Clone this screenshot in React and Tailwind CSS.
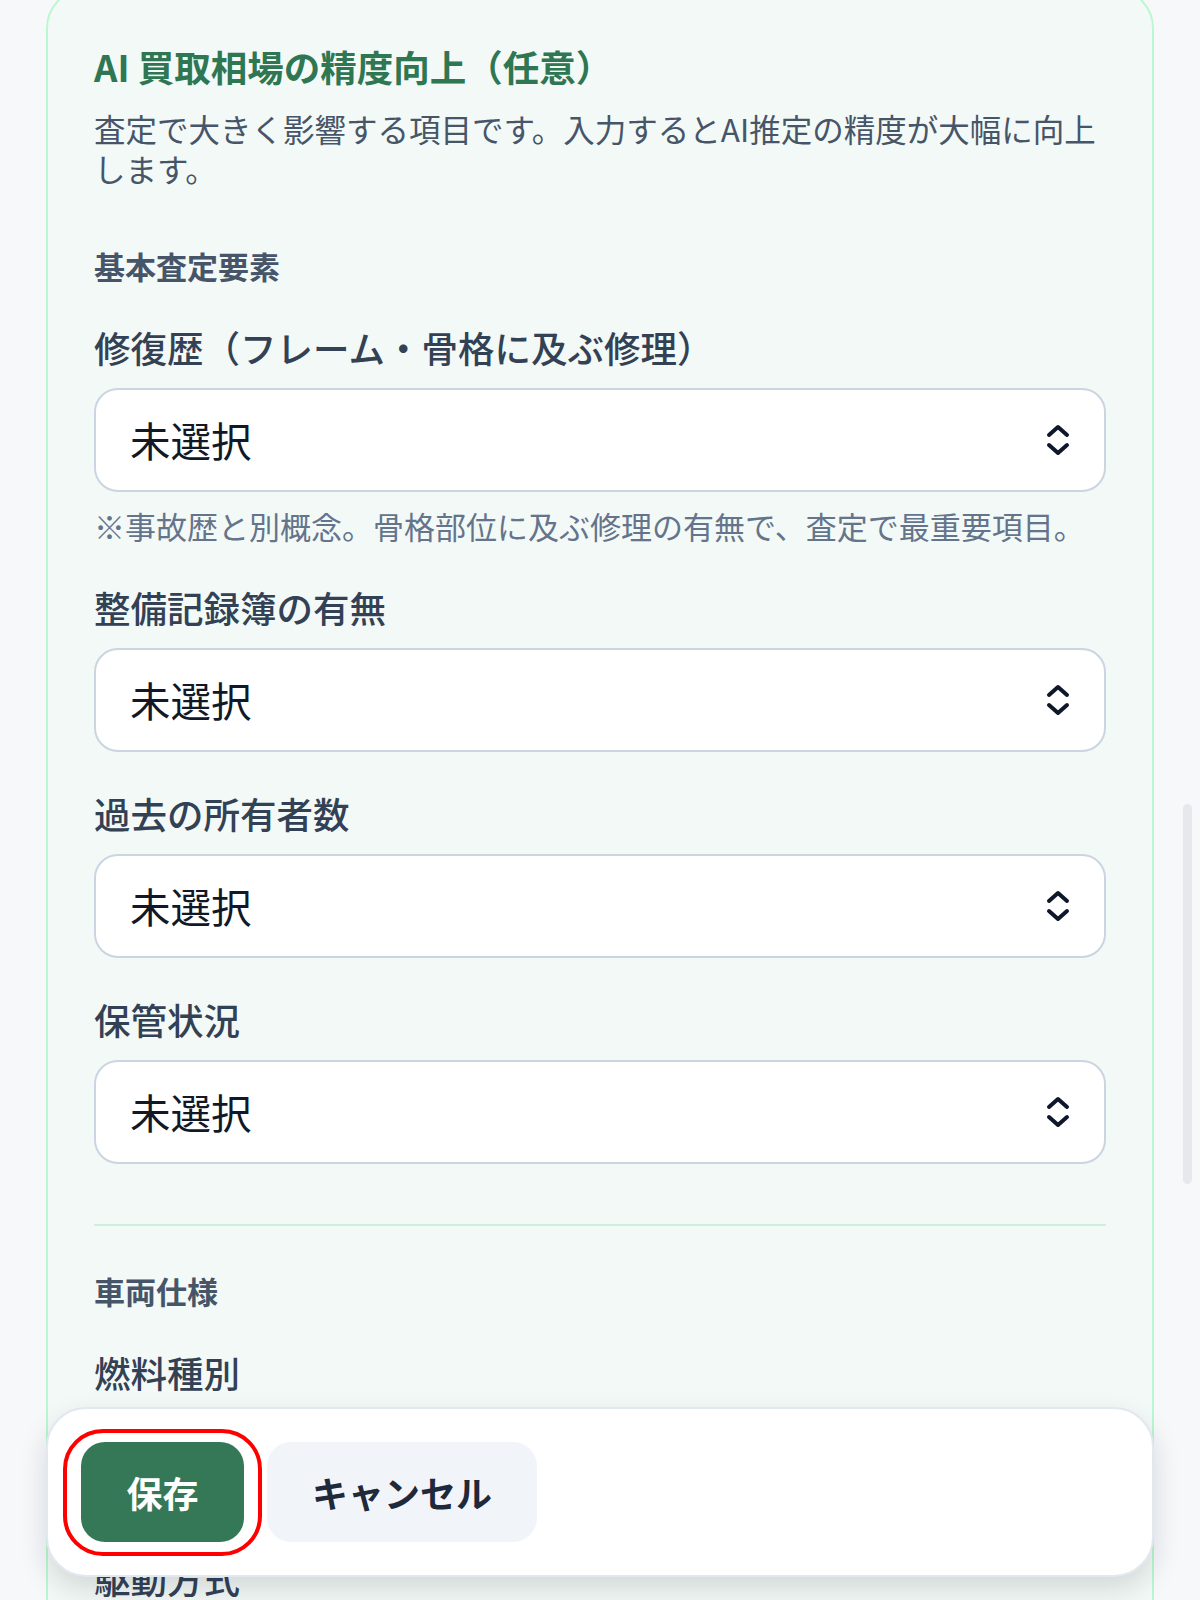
import React from "react";

function UpDown() {
  return (
    <svg width="24" height="32" viewBox="0 0 24 32" fill="none" stroke="#0f172a" strokeWidth="4" strokeLinecap="round" strokeLinejoin="round">
      <path d="M3 11 L12 3 L21 11" />
      <path d="M3 21 L12 29 L21 21" />
    </svg>
  );
}

function Field({ label, hint }) {
  return (
    <div className="flex flex-col">
      <div className="text-[36.5px] leading-[48px] font-medium text-[#334155]">{label}</div>
      <div className="mt-[16px] flex h-[104px] items-center justify-between rounded-[24px] border-2 border-[#cbd5e1] bg-white pl-[34px] pr-[34px]">
        <span className="text-[40.5px] leading-[48px] text-[#111827]">未選択</span>
        <UpDown />
      </div>
      {hint && (
        <div className="mt-[14px] text-[31px] leading-[40px] text-[#64748b]">{hint}</div>
      )}
    </div>
  );
}

export default function App() {
  return (
    <div className="relative h-[1600px] w-full overflow-hidden bg-[#f7f8fa] font-['Noto_Sans_CJK_JP','Noto_Sans',sans-serif]">
      <div className="mx-[46px] -mt-[12px] rounded-[40px] border-2 border-[#bbf7d0] bg-[#f3f9f6] px-[46px] pt-[55px] pb-[300px]">
        <h2 className="text-[36.5px] leading-[44px] font-bold text-[#2f7653]">AI 買取相場の精度向上（任意）</h2>
        <p className="mt-[19px] text-[31.5px] leading-[40px] text-[#475569]">
          査定で大きく影響する項目です。入力するとAI推定の精度が大幅に向上します。
        </p>
        <h3 className="mt-[58px] text-[31px] leading-[40px] font-bold text-[#475569]">基本査定要素</h3>
        <div className="mt-[38px] flex flex-col gap-[38px]">
          <Field
            label="修復歴（フレーム・骨格に及ぶ修理）"
            hint="※事故歴と別概念。骨格部位に及ぶ修理の有無で、査定で最重要項目。"
          />
          <Field label="整備記録簿の有無" />
          <Field label="過去の所有者数" />
          <Field label="保管状況" />
        </div>
        <div className="mt-[60px] h-[2px] bg-[#cdeedd]" />
        <h3 className="mt-[45px] text-[31px] leading-[40px] font-bold text-[#475569]">車両仕様</h3>
        <div className="mt-[38px] flex flex-col gap-[38px]">
          <Field label="燃料種別" />
          <Field label="駆動方式" />
        </div>
      </div>

      <div className="absolute left-[1183px] top-[804px] h-[380px] w-[9px] rounded-full bg-[#e7e8eb]" />

      <div className="absolute bottom-[23px] left-[46px] right-[46px] flex h-[170px] items-center gap-[23px] rounded-[40px] border-2 border-[#e2e8f0] bg-white pl-[33px] shadow-[0_12px_28px_rgba(15,23,42,0.14)]">
        <div className="relative">
          <div className="pointer-events-none absolute -bottom-[14px] -left-[18px] -right-[18px] -top-[13px] rounded-[40px] border-4 border-[#ff0000]" />
          <button className="flex h-[100px] w-[163px] items-center justify-center rounded-[24px] bg-[#347857] text-[36px] font-bold text-white">
            保存
          </button>
        </div>
        <button className="flex h-[100px] w-[270px] items-center justify-center rounded-[24px] bg-[#f1f5f9] text-[36px] font-bold text-[#1e293b]">
          キャンセル
        </button>
      </div>
    </div>
  );
}
